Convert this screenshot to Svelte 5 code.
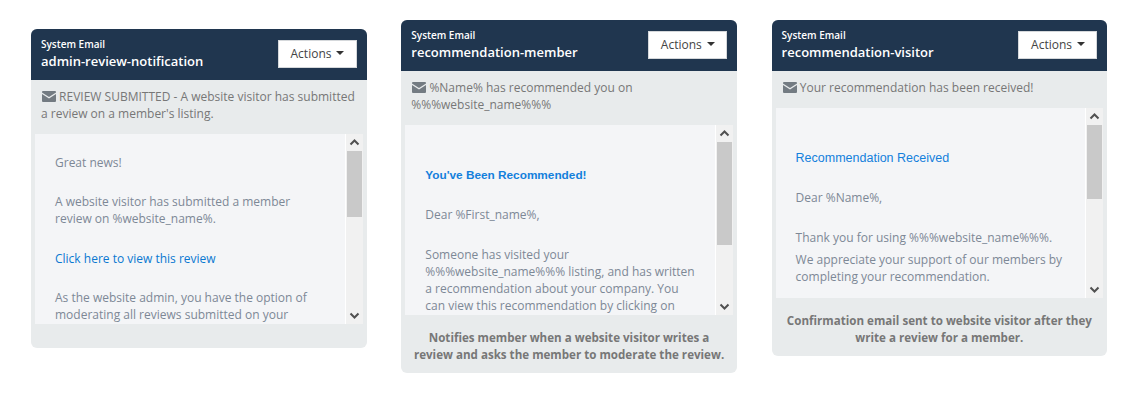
<script>
	const cards = [
		{
			name: 'admin-review-notification',
			subject: 'REVIEW SUBMITTED - A website visitor has submitted a review on a member\'s listing.',
			note: '',
			thumb: 66,
			offset: 'first'
		},
		{
			name: 'recommendation-member',
			subject: '%Name% has recommended you on %%%website_name%%%',
			note: 'Notifies member when a website visitor writes a review and asks the member to moderate the review.',
			thumb: 103,
			offset: 'member'
		},
		{
			name: 'recommendation-visitor',
			subject: 'Your recommendation has been received!',
			note: 'Confirmation email sent to website visitor after they write a review for a member.',
			thumb: 74,
			offset: 'visitor'
		}
	];
</script>

{#snippet preview(card)}
	{#if card.offset === 'first'}
		<p class="gap-none">Great news!</p>
		<p>A website visitor has submitted a member review on %website_name%.</p>
		<p class="gap-wide"><a href="#top">Click here to view</a> <span class="link-tail">this review</span></p>
		<p>As the website admin, you have the option of moderating all reviews submitted on your website.</p>
	{:else if card.offset === 'member'}
		<h4 class="title bold">You've Been Recommended!</h4>
		<p>Dear %First_name%,</p>
		<p class="gap-wide">Someone has visited your %%%website_name%%% listing, and has written a recommendation about your company. You can view this recommendation by clicking on the link below.</p>
	{:else}
		<h4 class="title">Recommendation Received</h4>
		<p>Dear %Name%,</p>
		<p class="gap-wide">Thank you for using %%%website_name%%%.</p>
		<p class="gap-small">We appreciate your support of our members by completing your recommendation.</p>
	{/if}
{/snippet}

<main class="page">
	{#each cards as card}
		<section class="card {card.offset}">
			<header class="head">
				<div class="head-text">
					<small>System Email</small>
					<strong>{card.name}</strong>
				</div>
				<button class="actions" type="button">Actions <span class="caret"></span></button>
			</header>

			<p class="subject">
				<svg class="mail" viewBox="0 0 14 11" width="14" height="11" aria-hidden="true">
					<path d="M1 0h12a1 1 0 0 1 1 1v.6L7 6 0 1.600V1a1 1 0 0 1 1-1z" />
					<path d="M0 3.100V10a1 1 0 0 0 1 1h12a1 1 0 0 0 1-1V3.100L7 7.500z" />
				</svg>
				{card.subject}
			</p>

			<div class="frame">
				<div class="content">
					{@render preview(card)}
				</div>
				<div class="scrollbar">
					<svg class="arrow" viewBox="0 0 17 17" width="17" height="17" aria-hidden="true">
						<path d="M4.500 10.500 8.500 6.500l4 4" />
					</svg>
					<div class="track">
						<div class="thumb" style="height: {card.thumb}px"></div>
					</div>
					<svg class="arrow" viewBox="0 0 17 17" width="17" height="17" aria-hidden="true">
						<path d="M4.500 6.500 8.500 10.500l4-4" />
					</svg>
				</div>
			</div>

			{#if card.note}
				<p class="note">{card.note}</p>
			{:else}
				<div class="note-empty"></div>
			{/if}
		</section>
	{/each}
</main>

<style>
	:global(body) {
		margin: 0;
		background: #fff;
	}

	.page {
		display: grid;
		grid-template-columns: repeat(3, 335.5px);
		column-gap: 34.8px;
		align-items: start;
		padding: 20px 0 0 31px;
		font-family: 'Open Sans', sans-serif;
		font-size: 12px;
		line-height: 17px;
		color: #777;
	}

	.card {
		background: #e8ebec;
		border-radius: 6px;
		overflow: hidden;
	}

	.card.first {
		margin-top: 9px;
	}

	.head {
		display: flex;
		justify-content: space-between;
		align-items: flex-start;
		height: 51px;
		box-sizing: border-box;
		padding: 8px 10px 0;
		background: #20364f;
		color: #fff;
	}

	.head-text {
		display: flex;
		flex-direction: column;
	}

	.head-text small {
		font-size: 10px;
		font-weight: 600;
		line-height: 14px;
	}

	.head-text strong {
		font-size: 13px;
		font-weight: 600;
		line-height: 20px;
	}

	.actions {
		display: flex;
		align-items: center;
		justify-content: center;
		gap: 5px;
		width: 79px;
		height: 28px;
		margin-top: 3px;
		padding: 0 0 2px 1px;
		border: 1px solid #d5d8db;
		background: #fff;
		color: #444;
		font: 400 12px/17px 'Open Sans', sans-serif;
	}

	.caret {
		border-top: 4px solid #333;
		border-left: 4px solid transparent;
		border-right: 4px solid transparent;
	}

	.subject {
		margin: 0;
		padding: 8px 10px 12px;
	}

	.mail {
		fill: #737b82;
		vertical-align: -1px;
		margin-left: 1px;
	}

	.frame {
		display: flex;
		height: 190px;
		margin: 0 4px;
		background: #f4f5f7;
	}

	.content {
		flex: 1;
		min-width: 0;
		overflow: hidden;
		padding: 20px 20px 0;
		color: #7d8896;
	}

	.content p {
		margin: 22px 0 0;
	}

	.content p.gap-none {
		margin-top: 0;
	}

	.content p.gap-wide {
		margin-top: 23px;
	}

	.content p.gap-small {
		margin-top: 5px;
	}

	.content a,
	.link-tail {
		color: #0a78d1;
		text-decoration: none;
	}

	.title {
		margin: 22px 0 0;
		font: 400 12.500px/17px 'Liberation Sans', Arial, sans-serif;
		color: #1380dc;
	}

	.title.bold {
		font-weight: 700;
		font-size: 11.8px;
	}

	.scrollbar {
		display: flex;
		flex-direction: column;
		flex: 0 0 17px;
		background: #f1f1f1;
		border-left: 1px solid #fff;
	}

	.track {
		flex: 1;
		padding: 0 1px;
	}

	.thumb {
		background: #c9c9c9;
	}

	.arrow {
		flex: 0 0 17px;
		fill: none;
		stroke: #505050;
		stroke-width: 2;
	}

	.note {
		margin: 0;
		padding: 14px 10px 10px;
		font-size: 11.6px;
		font-weight: 700;
		text-align: center;
	}

	.note-empty {
		height: 24px;
	}
</style>
